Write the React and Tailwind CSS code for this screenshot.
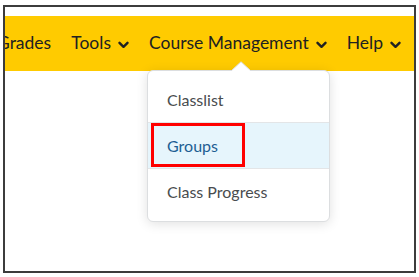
import React from "react";

function Chevron() {
  return (
    <svg width="11" height="8" viewBox="0 0 11 8" className="ml-[7px] mt-[3px]">
      <path d="M1.5 1.8 L5.5 5.8 L9.5 1.8" fill="none" stroke="#202122" strokeWidth="2.4" strokeLinecap="round" strokeLinejoin="round" />
    </svg>
  );
}

function NavItem({ label, chevron, className = "" }) {
  return (
    <div className={`flex items-center whitespace-nowrap ${className}`}>
      <span>{label}</span>
      {chevron && <Chevron />}
    </div>
  );
}

export default function App() {
  return (
    <div className="w-[419px] h-[277px] bg-white overflow-hidden" style={{ fontFamily: "Lato, 'Noto Sans', sans-serif" }}>
      <div className="relative ml-[3px] mt-[5px] w-[413px] h-[268px] border-2 border-[#3c3c3c] bg-white">
        <div className="mt-[9px] h-[55px] bg-[#ffcb00] overflow-hidden flex items-center text-[17.5px] text-[#202122]">
          <div className="flex items-center gap-[20px] ml-[-8px]">
            <NavItem label="Grades" />
            <NavItem label="Tools" chevron />
            <NavItem label="Course Management" chevron />
            <NavItem label="Help" chevron />
          </div>
        </div>

        <div className="absolute left-[142px] top-[63px] w-[183px] rounded-[6px] border border-[#dcdee0] bg-white shadow-[0_2px_12px_rgba(0,0,0,0.12)] py-[6px] text-[16px] text-[#494c4e]">
          <svg className="absolute left-[82px] top-[-10px]" width="22" height="11" viewBox="0 0 22 11">
            <path d="M0.5 10.5 L11 0.8 L21.5 10.5" fill="#ffffff" stroke="#dcdee0" strokeWidth="1" />
            <rect x="0" y="10" width="22" height="2" fill="#ffffff" />
          </svg>
          <div className="h-[46px] flex items-center pl-[19px] border-b border-[#e3e5e7]">Classlist</div>
          <div className="relative h-[46px] flex items-center pl-[19px] bg-[#e6f5fc] text-[#1d5e93] border-b border-[#e3e5e7]">
            Groups
            <div className="absolute left-[3px] top-[0px] w-[94px] h-[44px] border-[3px] border-[#ff0000]" />
          </div>
          <div className="h-[46px] flex items-center pl-[19px]">Class Progress</div>
        </div>
      </div>
    </div>
  );
}
